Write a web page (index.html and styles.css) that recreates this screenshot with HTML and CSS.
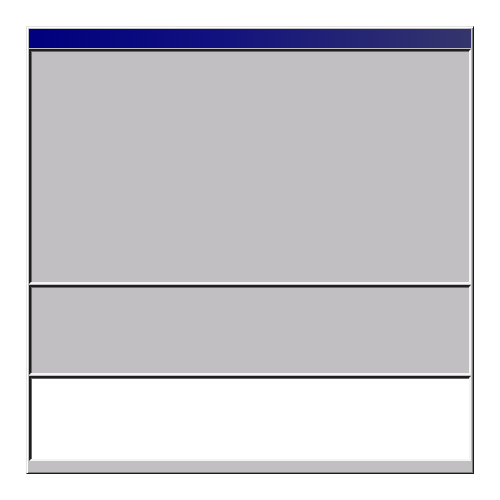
FILE: index.html
```html
<!DOCTYPE html>
<html>
<head>
<meta charset="utf-8">
<link rel="stylesheet" href="styles.css">
</head>
<body>
<div class="window">
  <div class="titlebar"></div>
  <div class="panel panel-top"></div>
  <div class="panel panel-mid"></div>
  <div class="panel panel-white"></div>
  <div class="statusbar"></div>
</div>
</body>
</html>
```
FILE: styles.css
```css
html, body {
  margin: 0;
  padding: 0;
  background: #ffffff;
  font-family: "Liberation Sans", Arial, sans-serif;
}
body {
  padding: 26px;
}
.window {
  box-sizing: border-box;
  width: 448px;
  height: 448px;
  background: #c1bfc1;
  border: 1px solid;
  border-color: #e4e4e4 #1a1a1a #1a1a1a #e4e4e4;
  box-shadow: inset 1px 1px 0 #ffffff, inset -1px -1px 0 #808080;
  padding: 2px;
  display: flex;
  flex-direction: column;
  gap: 1px;
}
.titlebar {
  height: 19px;
  flex: none;
  background: linear-gradient(to right, #00007e, #101080 40%, #34356c);
}
.panel {
  box-sizing: border-box;
  flex: none;
  border: 2px solid;
  border-color: #1e1e1e #f4f4f4 #f4f4f4 #1e1e1e;
  box-shadow: inset 1px 1px 0 #6a6a6a;
}
.panel-top {
  height: 235px;
  background: #c1bfc1;
}
.panel-mid {
  height: 90px;
  background: #c1bfc1;
}
.panel-white {
  height: 85px;
  background: #ffffff;
}
.statusbar {
  flex: 1;
}
```
